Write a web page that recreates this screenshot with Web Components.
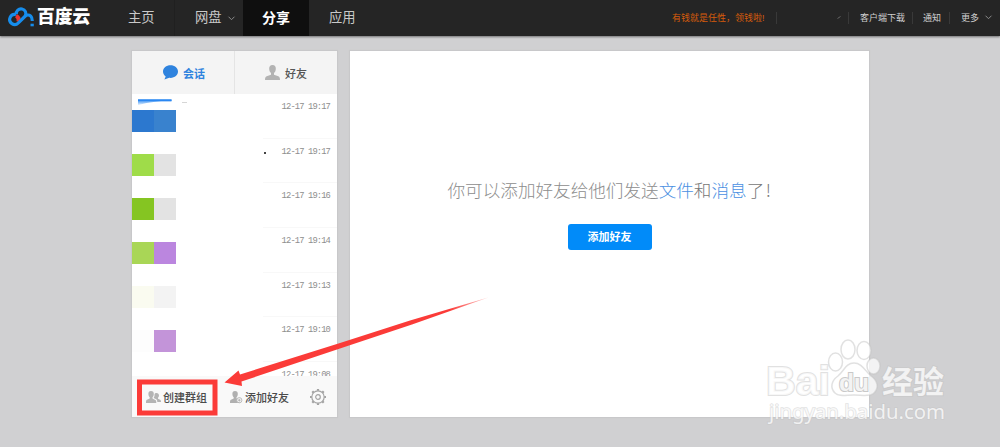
<!DOCTYPE html>
<html lang="zh-CN">
<head>
<meta charset="utf-8">
<title>百度云 分享</title>
<style>
    html, body {
        margin: 0;
        height: 447px;
        overflow: hidden;
    }
    body {
        position: relative;
        background: #d0d0d2;
        font-family: "Liberation Sans", "Noto Sans CJK SC", sans-serif;
        color: #555;
    }
    .columns {
        display: flex;
        gap: 13px;
        padding: 15px 0 0 132px;
    }
</style>
</head>
<body>
<pan-header></pan-header>
<div class="columns">
    <pan-sessions></pan-sessions>
    <pan-welcome></pan-welcome>
</div>
<page-marks></page-marks>

<template id="pan-icon-template">
    <style>
        :host { display: inline-flex; flex: none; }
        span { display: flex; }
        svg { display: block; overflow: visible; }
    </style>
    <span></span>
</template>

<template id="pan-header-template">
    <style>
        :host {
            display: flex;
            height: 36px;
            box-sizing: border-box;
            background: #252525;
            box-shadow: 0 1px 2px rgba(0, 0, 0, .45);
            color: #c9c9c9;
            white-space: nowrap;
        }
        .logo {
            display: flex;
            align-items: center;
            width: 108px;
            box-sizing: border-box;
            padding: 0 0 4px 8px;
            color: #fff;
            font-size: 17.8px;
            font-weight: 900;
            line-height: 32px;
        }
        .logo span { margin: 2px 0 0 3px; }
        nav { display: flex; }
        pan-tab { width: 67px; }
        pan-tab.first { box-shadow: inset -1px 0 #202020; }
        pan-tab[active] { margin-left: 1px; width: 66px; }
        .links {
            display: flex;
            align-items: center;
            margin-left: auto;
            height: 35px;
            font-size: 9px;
            line-height: 12px;
            color: #d0d0d0;
        }
        .links span { box-sizing: border-box; }
        .promo { color: #d65c0b; width: 104px; }
        .user { width: 71px; display: flex; justify-content: flex-end; padding-right: 7px; }
        .line { border-left: 1px solid #393939; height: 12px; flex: none; }
        .download { width: 63px; padding-left: 11px; }
        .notice { width: 36px; padding-left: 10px; }
        .more { width: 50px; padding-left: 11px; display: flex; align-items: center; gap: 6px; }
    </style>
    <div class="logo">
        <pan-icon name="cloud"></pan-icon><span>百度云</span>
    </div>
    <nav>
        <pan-tab class="first">主页</pan-tab>
        <pan-tab>网盘<pan-icon slot="after" name="chevron"></pan-icon></pan-tab>
        <pan-tab active>分享</pan-tab>
        <pan-tab>应用</pan-tab>
    </nav>
    <div class="links">
        <span class="promo">有钱就是任性，领钱啦!</span>
        <i class="line"></i>
        <span class="user"><pan-icon name="tick"></pan-icon></span>
        <i class="line"></i>
        <span class="download">客户端下载</span>
        <i class="line"></i>
        <span class="notice">通知</span>
        <i class="line"></i>
        <span class="more">更多<pan-icon name="chevron"></pan-icon></span>
    </div>
</template>

<template id="pan-tab-template">
    <style>
        :host {
            display: flex;
            align-items: center;
            box-sizing: border-box;
            height: 36px;
            padding-left: 20px;
            font-size: 13.3px;
            line-height: 36px;
        }
        :host([active]) {
            background: #0f0f0f;
            color: #fff;
            font-weight: bold;
            font-size: 14px;
            padding-left: 19px;
        }
        ::slotted(pan-icon) { margin-left: 6px; }
    </style>
    <slot></slot><slot name="after"></slot>
</template>

<template id="pan-sessions-template">
    <style>
        :host {
            display: flex;
            flex-direction: column;
            width: 205px;
            height: 366px;
            background: #fff;
            box-shadow: 0 0 1px 1px #c8c8ca;
            white-space: nowrap;
        }
        .tabs {
            display: grid;
            grid-template-columns: 103px 102px;
            height: 43px;
            background: #f4f4f4;
            font-size: 11px;
            font-weight: 500;
        }
        .tabs div { display: flex; align-items: center; gap: 5px; }
        .talk { color: #2f83de; padding-left: 31px; border-right: 1px solid #e4e4e4; font-weight: bold; }
        .friend { padding-left: 30px; }
        .list {
            display: flex;
            flex: 1;
            justify-content: space-between;
            overflow: hidden;
            min-height: 0;
        }
        .avatars { display: flex; flex-direction: column; gap: 22px; }
        .hint { display: flex; align-items: flex-start; height: 16px; margin-bottom: -22px; padding: 4px 0 0 6px; box-sizing: border-box; }
        .foot {
            display: flex;
            align-items: center;
            height: 41px;
            background: #f9f9f9;
            font-size: 11px;
            font-weight: 500;
            color: #4b4b4b;
        }
        .group { display: flex; align-items: center; gap: 2px; padding-left: 14px; width: 84px; box-sizing: border-box; }
        .add { display: flex; align-items: center; gap: 3px; padding-left: 14px; width: 94px; box-sizing: border-box; }
    </style>
    <div class="tabs">
        <div class="talk"><pan-icon name="bubble"></pan-icon>会话</div>
        <div class="friend"><pan-icon name="person"></pan-icon>好友</div>
    </div>
    <div class="list">
        <div class="avatars">
            <div class="hint"><pan-icon name="smear"></pan-icon></div>
            <color-pair left="#2c78cf" right="#3982ce"></color-pair>
            <color-pair left="#9fdc49" right="#e3e3e3"></color-pair>
            <color-pair left="#85c522" right="#e3e3e3"></color-pair>
            <color-pair left="#a9d656" right="#bb86df"></color-pair>
            <color-pair left="#fafbf0" right="#f3f3f3"></color-pair>
            <color-pair left="#fdfdfd" right="#c394d9"></color-pair>
        </div>
        <div class="times">
            <time-row>12-17 19:17</time-row>
            <time-row dot>12-17 19:17</time-row>
            <time-row>12-17 19:16</time-row>
            <time-row>12-17 19:14</time-row>
            <time-row>12-17 19:13</time-row>
            <time-row>12-17 19:10</time-row>
            <time-row>12-17 19:08</time-row>
        </div>
    </div>
    <div class="foot">
        <div class="group"><pan-icon name="people"></pan-icon>创建群组</div>
        <div class="add"><pan-icon name="personadd"></pan-icon>添加好友</div>
        <pan-icon name="gear"></pan-icon>
    </div>
</template>

<template id="color-pair-template">
    <style>
        :host { display: flex; width: 44px; height: 22px; flex: none; }
        i { width: 22px; }
    </style>
    <i class="left"></i><i class="right"></i>
</template>

<template id="time-row-template">
    <style>
        :host {
            display: flex;
            justify-content: flex-end;
            box-sizing: border-box;
            width: 74px;
            height: 44.7px;
            padding: 7px 7px 0 0;
            border-bottom: 1px solid #f8f8f8;
            font: 8.8px/12px "Liberation Mono", monospace;
            letter-spacing: -.88px;
            color: #8e8e8e;
        }
        .dot { display: none; width: 2px; height: 2px; background: #444; margin: 6px auto 0 1px; }
        :host([dot]) .dot { display: block; }
    </style>
    <i class="dot"></i><slot></slot>
</template>

<template id="pan-welcome-template">
    <style>
        :host {
            display: flex;
            flex-direction: column;
            align-items: center;
            box-sizing: border-box;
            width: 519px;
            height: 366px;
            padding-top: 126px;
            background: #fff;
            box-shadow: 0 0 1px 1px #c8c8ca;
            white-space: nowrap;
        }
        p {
            margin: 0 0 21px 1px;
            font: 300 17.6px/26px "Noto Sans CJK SC", sans-serif;
            color: #8d8d8d;
        }
        b { font-weight: 300; color: #4a90e2; }
        em { font-style: normal; color: #777; }
        .end { letter-spacing: 1.5px; }
        button {
            width: 84px;
            height: 26px;
            padding: 0;
            border: 0;
            border-radius: 3px;
            background: #018bf9;
            color: #fff;
            font: bold 11px/26px "Liberation Sans", "Noto Sans CJK SC", sans-serif;
        }
    </style>
    <p>你可以添加好友给他们发送<b>文件</b><em>和</em><b>消息</b><em class="end">了!</em></p>
    <button>添加好友</button>
</template>

<template id="page-marks-template">
    <style>
        :host {
            position: absolute;
            top: 0;
            left: 0;
            width: 1000px;
            height: 447px;
            pointer-events: none;
        }
        svg { display: block; }
        text { paint-order: stroke; }
    </style>
    <svg width="1000" height="447" viewBox="0 0 1000 447">
        <defs>
            <linearGradient id="fade" gradientUnits="userSpaceOnUse" x1="225" y1="0" x2="489" y2="0">
                <stop offset=".85" stop-color="#fb3b38"/>
                <stop offset="1" stop-color="#fb3b38" stop-opacity=".25"/>
            </linearGradient>
        </defs>
        <!-- callout frame and arrow -->
        <rect x="139.500" y="382" width="75.500" height="31" fill="none" stroke="#fb3b38" stroke-width="5"/>
        <path d="M224.500 382.500 238.500 370.500l1.500 4L340 343l70-22.500 79-23.200L412 324.500 340 348.500l-98.500 33 .5 4.500z" fill="url(#fade)"/>
        <!-- watermark -->
        <g fill="#fff" fill-opacity=".75" stroke="#c4c4c4" stroke-opacity=".5" stroke-width="2" font-family="Liberation Sans, sans-serif" font-weight="bold">
            <text x="766" y="395" font-size="40" textLength="64" lengthAdjust="spacingAndGlyphs">Bai</text>
            <ellipse cx="835.500" cy="362" rx="7" ry="9" stroke-width="1.500"/>
            <ellipse cx="848" cy="349.500" rx="7" ry="9.500" stroke-width="1.500"/>
            <ellipse cx="864" cy="350.500" rx="7" ry="9" stroke-width="1.500"/>
            <ellipse cx="873.500" cy="366" rx="6.500" ry="8" stroke-width="1.500"/>
            <path d="M854 363c-8 0-10 8-16 13-7 5-8 12-3 17 4 4 11 2 19 2s16 2 20-2c5-5 4-12-3-17-6-5-9-13-17-13z" stroke-width="1.500"/>
            <text x="839" y="391" font-size="24" fill="#f3f3f3" fill-opacity="1" stroke="#bbb" stroke-opacity=".8" textLength="30" lengthAdjust="spacingAndGlyphs">du</text>
            <text x="882" y="392.500" font-size="31" font-family="Noto Sans CJK SC, sans-serif" textLength="62" lengthAdjust="spacingAndGlyphs">经验</text>
            <text x="769" y="418.500" font-size="20" font-family="Noto Sans, sans-serif" font-weight="normal" stroke-width="1.500" textLength="176" lengthAdjust="spacingAndGlyphs">jingyan.baidu.com</text>
        </g>
    </svg>
</template>

<script>
    const icons = {
        cloud: `<svg width="26" height="21" viewBox="0 0 26 21" fill="none" stroke="#168dec" stroke-width="3.200">
            <path d="M8 9.800c2.200 1 3.200 3.200 2.500 6" stroke="#e9322f" stroke-width="4"/>
            <path d="M8 8.700a5 5 0 1 0 2.300 8.300l6.500-6.500c1.700-1.700 4.200-2 6-.4 1.200 1.100 1.500 2.600 1.500 5"/>
            <path d="M8.300 8.300a4.800 4.800 0 1 1 8.900 1.800"/>
            <path d="M22.500 19h3.300" stroke-width="2.600"/></svg>`,
        chevron: '<svg width="7" height="5" viewBox="0 0 7 5" fill="none" stroke="#8a8a8a"><path d="M.5.700l3 3 3-3"/></svg>',
        tick: '<svg width="4" height="3" viewBox="0 0 4 3" fill="none" stroke="#666"><path d="M.5 2.500l3-2"/></svg>',
        bubble: '<svg width="15" height="15" viewBox="0 0 15 15" fill="#2f83de"><path d="M7.500.3C3.300.3 0 3 0 6.600c0 2 1.100 3.800 2.700 5L1.400 14.500l4.800-1.700c5 .6 8.800-2.400 8.800-6.200C15 3 11.600.3 7.500.3z"/></svg>',
        person: '<svg width="15" height="15" viewBox="0 0 15 15" fill="#b3b3b3"><path d="M7.500 0C5 0 4 1.700 4.200 4c.1 2 .8 3.300 1.800 4v1.700L1.700 11.200C.5 11.700 0 12.500 0 15h15c0-2.500-.5-3.300-1.700-3.800L9 9.700V8c1-.7 1.700-2 1.800-4C11 1.700 10 0 7.500 0z"/></svg>',
        people: `<svg width="15" height="12" viewBox="0 0 15 12" fill="#b4b4b4">
            <path d="M5 0C3.200 0 2.300 1.200 2.400 3c.1 1.700.6 2.700 1.300 3.300v1.200L1 8.800c-.8.4-1 1-1 3.200h10.300c0-2-.2-2.700-1-3.100L6.500 7.500V6.300C7.200 5.700 7.700 4.700 7.800 3 7.900 1.200 6.900 0 5 0z"/>
            <path d="M10.500 2c-1 0-1.700.4-2 1.200.2 1.500-.2 2.700-.9 3.800l2.700 1.300c.7.6.9 1.400 1 2.700H15c0-1.400-.3-2-.9-2.300L12 7.700v-1c.6-.5 1-1.300 1-2.300C13 3 12 2 10.500 2z"/></svg>`,
        personadd: `<svg width="12" height="12" viewBox="0 0 12 12" fill="#b0b0b0">
            <path d="M5 0C3.200 0 2.300 1.200 2.400 3c.1 1.700.6 2.700 1.300 3.300v1.200L1 8.800c-.8.4-1 1-1 3.200h10V9L6.500 7.500V6.300C7.200 5.700 7.700 4.700 7.800 3 7.900 1.200 6.900 0 5 0z"/>
            <circle cx="9.300" cy="9.200" r="2.600" fill="#f9f9f9" stroke="#aaa" stroke-width=".8"/>
            <path d="M9.300 7.800v2.800M7.900 9.200h2.800" stroke="#aaa" stroke-width=".8"/></svg>`,
        gear: `<svg width="16" height="16" viewBox="0 0 16 16" fill="none" stroke="#a3a3a3">
            <circle cx="8" cy="8" r="6.200" stroke-width="1.200"/><circle cx="8" cy="8" r="2.300" stroke-width="1.200"/>
            <path d="M8 0v1.800M8 14.200V16M0 8h1.800M14.200 8H16M2.300 2.300l1.300 1.300M12.400 12.400l1.300 1.300M13.700 2.300l-1.300 1.300M3.600 12.400l-1.300 1.300" stroke-width="2.200"/></svg>`,
        smear: `<svg width="52" height="8" viewBox="0 0 52 8">
            <defs><linearGradient id="g" x2="0" y2="1"><stop stop-color="#167df0"/><stop offset="1" stop-color="#167df0" stop-opacity="0"/></linearGradient></defs>
            <path d="M0 1.500h33.500v2C20 3 8 4 0 7.500z" fill="url(#g)"/><path d="M0 1.500h33.500V3H0z" fill="#2a87f2"/>
            <path d="M44 4h5v.8h-5z" fill="#ccc"/></svg>`
    };

    // attaches an open root filled from "<tag>-template"
    class panElement extends HTMLElement {
        constructor() {
            super();
            const t = document.querySelector('#' + this.localName + '-template');
            this.attachShadow({ mode: 'open' }).appendChild(t.content.cloneNode(true));
        }
    }

    class panIcon extends panElement {
        connectedCallback() {
            this.shadowRoot.querySelector('span').innerHTML = icons[this.getAttribute('name')];
        }
    }

    class colorPair extends panElement {
        connectedCallback() {
            for (const side of ['left', 'right']) {
                this.shadowRoot.querySelector('.' + side).style.background = this.getAttribute(side);
            }
        }
    }

    customElements.define('pan-icon', panIcon);
    customElements.define('color-pair', colorPair);
    customElements.define('time-row', class extends panElement {});
    customElements.define('pan-tab', class extends panElement {});
    customElements.define('pan-header', class extends panElement {});
    customElements.define('pan-sessions', class extends panElement {});
    customElements.define('pan-welcome', class extends panElement {});
    customElements.define('page-marks', class extends panElement {});
</script>
</body>
</html>
